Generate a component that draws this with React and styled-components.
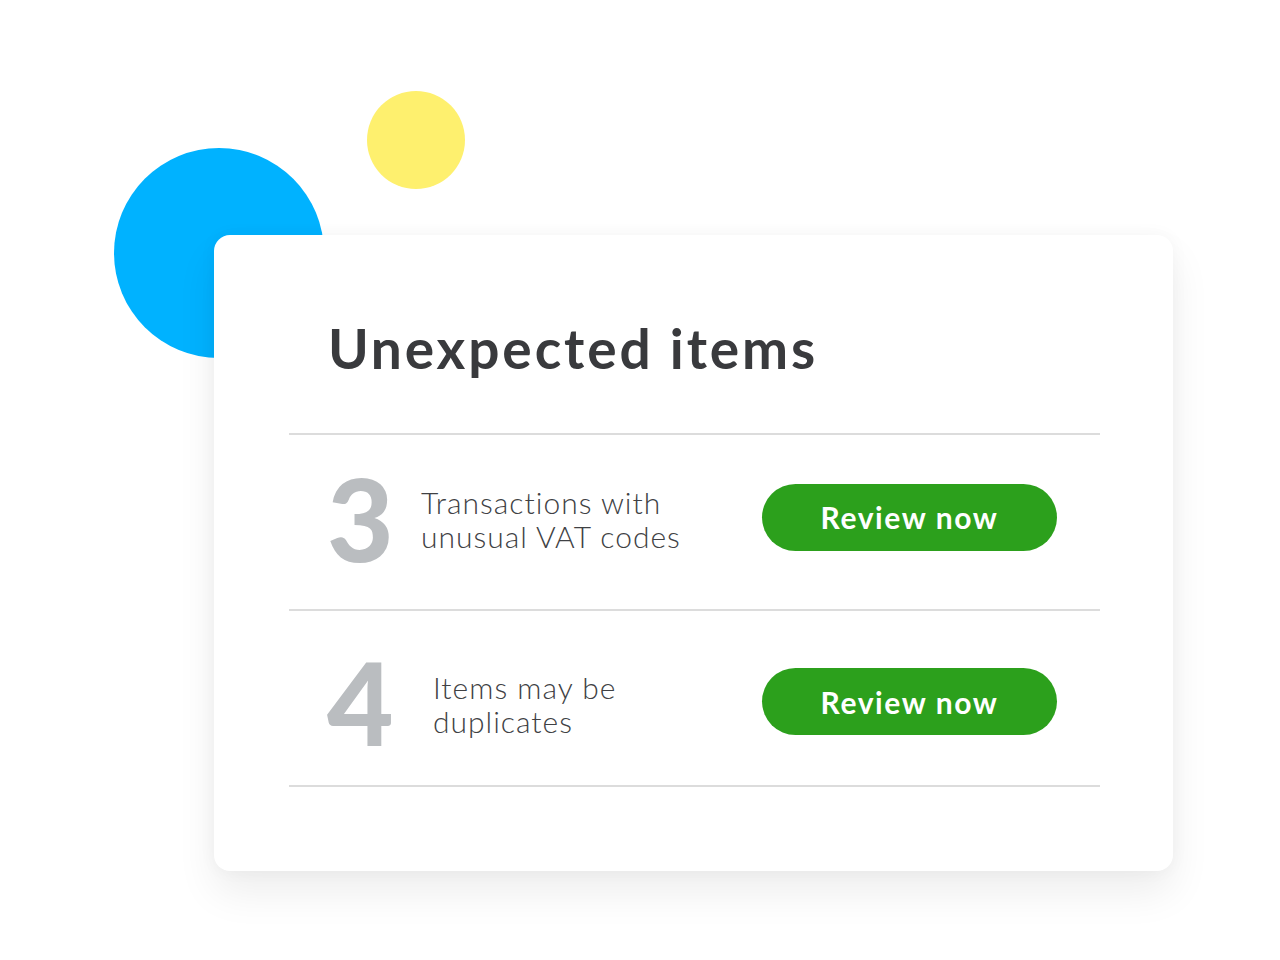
import React from "react";
import styled, { createGlobalStyle } from "styled-components";

const Global = createGlobalStyle`
  html, body { margin: 0; padding: 0; background: #ffffff; }
  body { font-family: "Lato", "Noto Sans", sans-serif; color: #393a3d; }
`;

const Page = styled.div`
  position: relative;
  width: 1280px;
  height: 960px;
  overflow: hidden;
  padding: 235px 0 0 214px;
  box-sizing: border-box;
`;

const Dot = styled.div`
  position: absolute;
  left: ${(p) => p.$x}px;
  top: ${(p) => p.$y}px;
  width: ${(p) => p.$size}px;
  height: ${(p) => p.$size}px;
  border-radius: 50%;
  background: ${(p) => p.$color};
`;

const Card = styled.section`
  position: relative;
  width: 959px;
  height: 636px;
  box-sizing: border-box;
  background: #ffffff;
  border-radius: 16px;
  box-shadow: 0 22px 40px rgba(0, 0, 0, 0.07), 0 0 18px rgba(0, 0, 0, 0.04);
  padding: 77px 73px 0 75px;
  display: flex;
  flex-direction: column;
`;

const Title = styled.h1`
  margin: 0 0 0 39px;
  font-family: "Lato", sans-serif;
  font-weight: 700;
  font-size: 55px;
  line-height: 72px;
  letter-spacing: 2.9px;
  color: #393a3d;
  height: 121px;
`;

const Divider = styled.div`
  height: 2px;
  background: #dcdcdc;
`;

const Row = styled.div`
  height: 174px;
  box-sizing: border-box;
  display: flex;
  align-items: center;
  padding: ${(p) => (p.$offset > 0 ? p.$offset : 0)}px 43px
    ${(p) => (p.$offset < 0 ? -p.$offset : 0)}px 41px;
`;

const Count = styled.div`
  font-family: "Lato", sans-serif;
  font-weight: 900;
  font-size: 115px;
  line-height: 1;
  color: #babdc0;
  margin-left: -3px;
  width: ${(p) => p.$w + 3}px;
  margin-right: ${(p) => p.$gap}px;
`;

const Label = styled.div`
  font-family: "Lato", sans-serif;
  font-weight: 300;
  font-size: 30px;
  line-height: 34px;
  color: #404144;
  letter-spacing: 1px;
  margin-top: 4px;
`;

const ReviewButton = styled.button`
  margin-left: auto;
  width: 295px;
  height: 67px;
  border: none;
  border-radius: 34px;
  background: #2ca01c;
  color: #ffffff;
  font-family: "Lato", sans-serif;
  font-weight: 700;
  font-size: 30px;
  letter-spacing: 1.6px;
  cursor: pointer;
`;

const items = [
  { n: "3", w: 62, gap: 29, offset: -10, lines: ["Transactions with", "unusual VAT codes"] },
  { n: "4", w: 72, gap: 31, offset: 7, lines: ["Items may be", "duplicates"] },
];

export default function App() {
  return (
    <>
      <Global />
      <Page>
        <Dot $x={114} $y={148} $size={210} $color="#00b2ff" />
        <Dot $x={367} $y={91} $size={98} $color="#fef06e" />
        <Card>
          <Title>Unexpected items</Title>
          <Divider />
          {items.map((it) => (
            <React.Fragment key={it.n}>
              <Row $offset={it.offset}>
                <Count $w={it.w} $gap={it.gap}>{it.n}</Count>
                <Label>
                  {it.lines[0]}
                  <br />
                  {it.lines[1]}
                </Label>
                <ReviewButton>Review now</ReviewButton>
              </Row>
              <Divider />
            </React.Fragment>
          ))}
        </Card>
      </Page>
    </>
  );
}
